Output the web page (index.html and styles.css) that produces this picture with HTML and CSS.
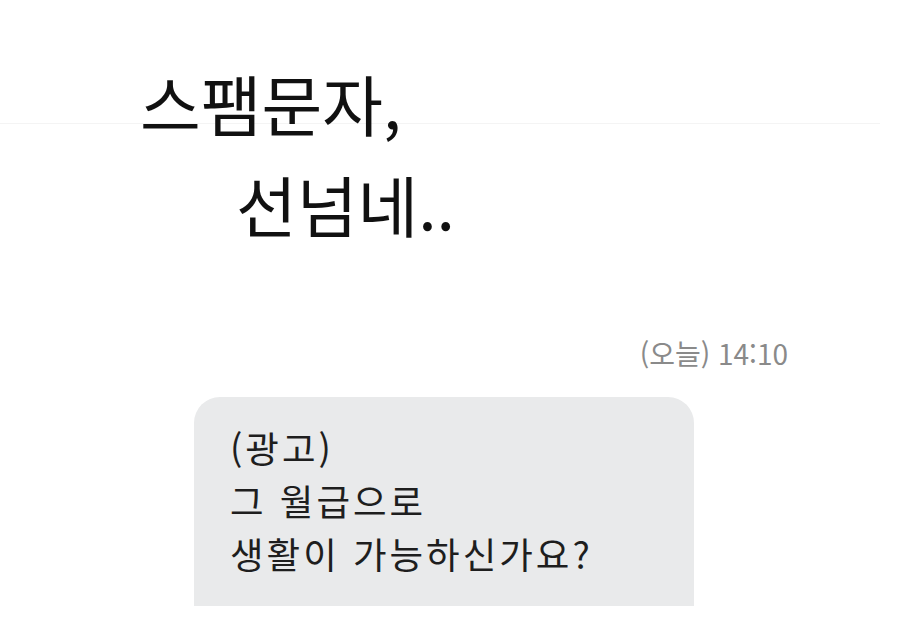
FILE: index.html
```html
<!DOCTYPE html>
<html lang="ko">
  <head>
    <meta charset="UTF-8" />
    <meta name="viewport" content="width=device-width, initial-scale=1.0" />
    <title>스팸문자</title>
    <link rel="stylesheet" href="styles.css">
  </head>
  <body>
    <div class="screen">
      <div class="title">
        <p class="line1">스팸문자,</p>
        <p class="line2">선넘네..</p>
      </div>
      <div class="time">(오늘) 14:10</div>
      <div class="bubble">
        <p>(광고)</p>
        <p>그 월급으로</p>
        <p>생활이 가능하신가요?</p>
      </div>
    </div>
  </body>
</html>
```

FILE: styles.css
```css
* {
  margin: 0;
  padding: 0;
}
body {
  background: #fff;
  font-family: "Noto Sans CJK KR", "Noto Sans", sans-serif;
}
.screen {
  width: 900px;
  height: 634px;
  overflow: hidden;
  display: flex;
  flex-direction: column;
  background: linear-gradient(#f4f4f4, #f4f4f4) 0 123px / 880px 1px no-repeat;
}
.title {
  padding-top: 52px;
  font-size: 66px;
  line-height: 101px;
  color: #111;
}
.title .line1 {
  padding-left: 140px;
}
.title .line2 {
  padding-left: 236px;
}
.time {
  margin-top: 82px;
  padding-right: 112px;
  text-align: right;
  font-size: 28px;
  line-height: 34px;
  color: #8a8a8a;
}
.bubble {
  margin-top: 27px;
  margin-left: 194px;
  width: 500px;
  height: 209px;
  padding: 24px 0 0 36px;
  box-sizing: border-box;
  background: #e9eaeb;
  border-radius: 26px 26px 0 0;
  font-size: 36.5px;
  line-height: 53px;
  letter-spacing: 3px;
  color: #1e1e1e;
}
```
